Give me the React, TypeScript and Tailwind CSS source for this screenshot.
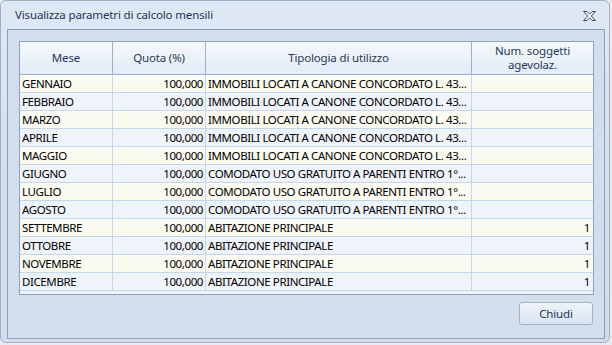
import React from "react";

const rows: { m: string; t: string; n: string }[] = [
  { m: "GENNAIO", t: "IMMOBILI LOCATI A CANONE CONCORDATO L. 43...", n: "" },
  { m: "FEBBRAIO", t: "IMMOBILI LOCATI A CANONE CONCORDATO L. 43...", n: "" },
  { m: "MARZO", t: "IMMOBILI LOCATI A CANONE CONCORDATO L. 43...", n: "" },
  { m: "APRILE", t: "IMMOBILI LOCATI A CANONE CONCORDATO L. 43...", n: "" },
  { m: "MAGGIO", t: "IMMOBILI LOCATI A CANONE CONCORDATO L. 43...", n: "" },
  { m: "GIUGNO", t: "COMODATO USO GRATUITO A PARENTI ENTRO 1°...", n: "" },
  { m: "LUGLIO", t: "COMODATO USO GRATUITO A PARENTI ENTRO 1°...", n: "" },
  { m: "AGOSTO", t: "COMODATO USO GRATUITO A PARENTI ENTRO 1°...", n: "" },
  { m: "SETTEMBRE", t: "ABITAZIONE PRINCIPALE", n: "1" },
  { m: "OTTOBRE", t: "ABITAZIONE PRINCIPALE", n: "1" },
  { m: "NOVEMBRE", t: "ABITAZIONE PRINCIPALE", n: "1" },
  { m: "DICEMBRE", t: "ABITAZIONE PRINCIPALE", n: "1" },
];

const font = { fontFamily: '"Noto Sans", "Open Sans", sans-serif' };

function CloseIcon() {
  return (
    <svg width="13" height="10" viewBox="0 0 13 10">
      <path
        d="M0.5 0.5 H4 L6.5 3.2 L9 0.5 H12.5 L8.3 5 L12.5 9.5 H9 L6.5 6.8 L4 9.5 H0.5 L4.7 5 Z"
        fill="#f7f8fa"
        stroke="#3f4a5a"
        strokeWidth="1"
        strokeLinejoin="round"
      />
    </svg>
  );
}

export default function App() {
  return (
    <div className="w-[612px] h-[345px] bg-[#e9ebee] overflow-hidden" style={font}>
      <div className="w-[610px] h-[343px] rounded-[6px] border border-[#9fafc5] bg-gradient-to-b from-[#dfe8f5] via-[#d4dfee] to-[#d2ddec] flex flex-col">
        <div className="h-[28px] flex items-center justify-between pl-[14px] pr-[13px]">
          <span className="text-[11.5px] tracking-[-0.15px] text-[#1e3557] leading-none -mt-[1px]">
            Visualizza parametri di calcolo mensili
          </span>
          <span className="mt-[2px]">
            <CloseIcon />
          </span>
        </div>
        <div className="ml-[6px] w-[598px] h-[310px] border border-[#8d9db5] bg-[#d3deed] flex flex-col pt-[11px] pl-[11px]">
          <div className="w-[575px] h-[254px] border border-[#8fa2bf] bg-[#eef3fa] flex flex-col">
            <div className="h-[33px] border-b border-[#9cafc9] bg-gradient-to-b from-[#f5f8fc] to-[#e3ebf6] grid grid-cols-[93px_93px_266px_121px] text-[11.5px] tracking-[-0.15px] text-[#26395a]">
              <div className="border-r border-[#9cafc9] flex items-center justify-center">Mese</div>
              <div className="border-r border-[#9cafc9] flex items-center justify-center">Quota (%)</div>
              <div className="border-r border-[#9cafc9] flex items-center justify-center">Tipologia di utilizzo</div>
              <div className="flex flex-col items-center justify-center leading-[14px] pb-[1px]">
                <span className="leading-[14px]">Num. soggetti</span>
                <span className="leading-[14px]">agevolaz.</span>
              </div>
            </div>
            {rows.map((r, i) => (
              <div
                key={r.m}
                className={`h-[18px] border-b border-[#c3d6f0] grid grid-cols-[93px_93px_266px_121px] text-[11.5px] tracking-[-0.4px] text-black leading-[17px] ${
                  i % 2 === 0 ? "bg-[#fbfbf2]" : "bg-[#eff3fa]"
                }`}
              >
                <div className="border-r border-[#c3d6f0] pl-[2px] whitespace-nowrap overflow-hidden">{r.m}</div>
                <div className="border-r border-[#c3d6f0] pr-[2px] text-right whitespace-nowrap overflow-hidden">100,000</div>
                <div className="border-r border-[#c3d6f0] pl-[2px] whitespace-nowrap overflow-hidden">{r.t}</div>
                <div className="pr-[3px] text-right whitespace-nowrap overflow-hidden">{r.n}</div>
              </div>
            ))}
          </div>
          <div className="w-[575px] flex justify-end pr-[1px] mt-[7px]">
            <button className="w-[74px] h-[23px] rounded-[3px] border border-[#a6b3c4] bg-gradient-to-b from-[#eef3fa] to-[#dbe5f2] text-[11.5px] tracking-[-0.15px] text-[#1e3557] leading-none">
              Chiudi
            </button>
          </div>
        </div>
      </div>
    </div>
  );
}
